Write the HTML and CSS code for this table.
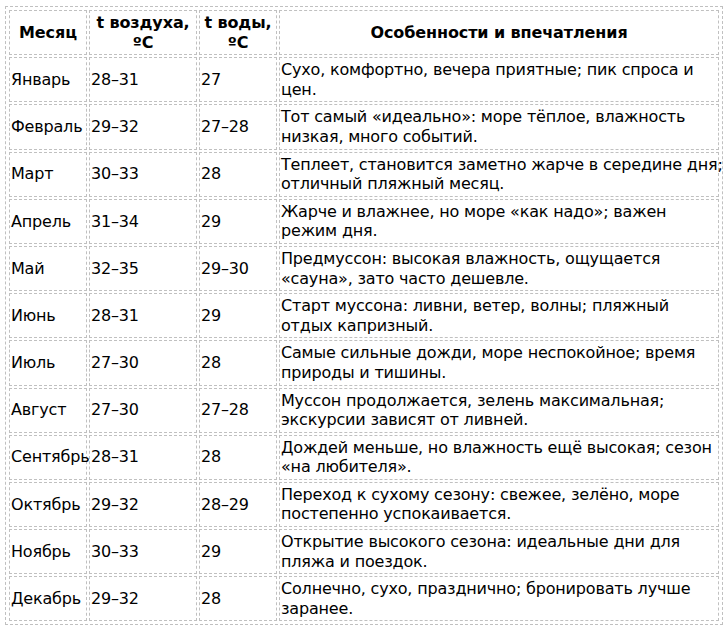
FILE: index.html
```html
<!DOCTYPE html>
<html lang="ru">
<head>
<meta charset="utf-8">
<link rel="stylesheet" href="styles.css">
</head>
<body>
<table class="climate">
  <colgroup>
    <col class="c-month">
    <col class="c-air">
    <col class="c-water">
    <col class="c-notes">
  </colgroup>
  <thead>
    <tr>
      <th>Месяц</th>
      <th>t воздуха, <span class="deg">ºC</span></th>
      <th>t воды, <span class="deg">ºC</span></th>
      <th>Особенности и впечатления</th>
    </tr>
  </thead>
  <tbody>
    <tr><td>Январь</td><td>28–31</td><td>27</td><td>Сухо, комфортно, вечера приятные; пик спроса и<br>цен.</td></tr>
    <tr><td>Февраль</td><td>29–32</td><td>27–28</td><td>Тот самый «идеально»: море тёплое, влажность<br>низкая, много событий.</td></tr>
    <tr><td>Март</td><td>30–33</td><td>28</td><td>Теплеет, становится заметно жарче в середине дня;<br>отличный пляжный месяц.</td></tr>
    <tr><td>Апрель</td><td>31–34</td><td>29</td><td>Жарче и влажнее, но море «как надо»; важен<br>режим дня.</td></tr>
    <tr><td>Май</td><td>32–35</td><td>29–30</td><td>Предмуссон: высокая влажность, ощущается<br>«сауна», зато часто дешевле.</td></tr>
    <tr><td>Июнь</td><td>28–31</td><td>29</td><td>Старт муссона: ливни, ветер, волны; пляжный<br>отдых капризный.</td></tr>
    <tr><td>Июль</td><td>27–30</td><td>28</td><td>Самые сильные дожди, море неспокойное; время<br>природы и тишины.</td></tr>
    <tr><td>Август</td><td>27–30</td><td>27–28</td><td>Муссон продолжается, зелень максимальная;<br>экскурсии зависят от ливней.</td></tr>
    <tr><td>Сентябрь</td><td>28–31</td><td>28</td><td>Дождей меньше, но влажность ещё высокая; сезон<br>«на любителя».</td></tr>
    <tr><td>Октябрь</td><td>29–32</td><td>28–29</td><td>Переход к сухому сезону: свежее, зелёно, море<br>постепенно успокаивается.</td></tr>
    <tr><td>Ноябрь</td><td>30–33</td><td>29</td><td>Открытие высокого сезона: идеальные дни для<br>пляжа и поездок.</td></tr>
    <tr><td>Декабрь</td><td>29–32</td><td>28</td><td>Солнечно, сухо, празднично; бронировать лучше<br>заранее.</td></tr>
  </tbody>
</table>
</body>
</html>
```
FILE: styles.css
```css
html, body {
  margin: 0;
  background: #ffffff;
}
body {
  padding: 6px 0 0 5px;
  font-family: "DejaVu Sans", Verdana, sans-serif;
  font-size: 16px;
  color: #000;
}
.climate {
  table-layout: fixed;
  width: 717px;
  border: 1px dashed #c0c0c0;
  border-spacing: 2px;
  padding: 1px;
}
.c-month { width: 78px; }
.c-air { width: 108px; }
.c-water { width: 78px; }
.c-notes { width: 440px; }
.climate th,
.climate td {
  border: 1px dashed #c0c0c0;
  padding: 2px 1px;
  line-height: 19.6px;
  vertical-align: middle;
  box-sizing: border-box;
}
.climate th {
  font-weight: bold;
  text-align: center;
  letter-spacing: -0.1px;
}
.climate td {
  text-align: left;
  white-space: nowrap;
  letter-spacing: -0.18px;
}
```
